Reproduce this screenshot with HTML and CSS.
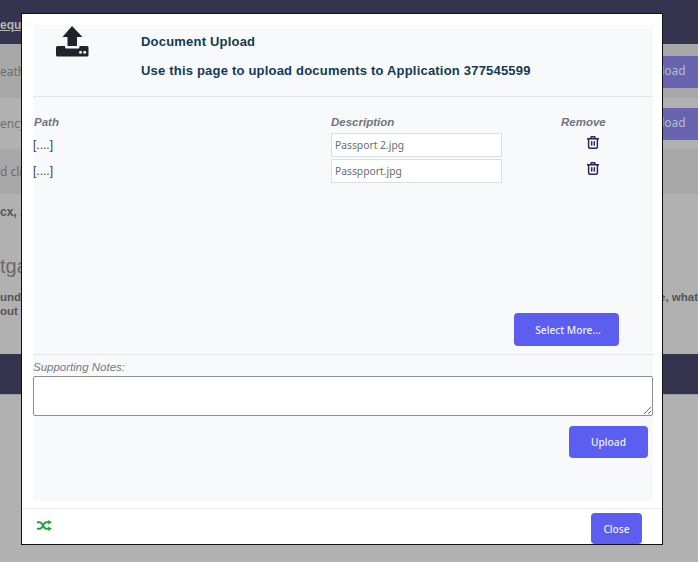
FILE: index.html
```html
<!DOCTYPE html>
<html lang="en">
<head>
<meta charset="utf-8">
<title>Document Upload</title>
<link rel="stylesheet" href="styles.css">
</head>
<body>
<div class="page">
  <div class="nav"><a class="nav-link" href="#">equ</a></div>
  <div class="band band-a"><span class="band-text">eath</span><span class="ghost-btn">Upload</span></div>
  <div class="band band-b"><span class="band-text">ency</span><span class="ghost-btn">Upload</span></div>
  <div class="band band-c"><span class="band-text">d clic</span></div>
  <div class="lower">
    <p class="docs">cx, .</p>
    <h2 class="mort">tga</h2>
    <div class="para">
      <span class="para-left">und<br>out t</span>
      <span class="para-right">e, what</span>
    </div>
  </div>
  <div class="footer-band"></div>
</div>

<div class="modal">
  <div class="panel">
    <div class="head">
      <svg class="upload-icon" viewBox="0 0 33 31" aria-hidden="true">
        <path class="ic-dark" d="M16 0 L26.500 11 H21 V20 H11.500 V11 H6.500 Z"/>
        <path class="ic-dark" d="M1.500 20 H9 V21 Q9 22.500 10.500 22.500 H22 Q23.500 22.500 23.500 21 V20 H31 Q32.500 20 32.500 21.500 V29 Q32.500 30.500 31 30.500 H1.500 Q0 30.500 0 29 V21.500 Q0 20 1.500 20 Z"/>
        <circle class="ic-light" cx="24.500" cy="26.300" r="1.500"/>
        <circle class="ic-light" cx="28.700" cy="26.300" r="1.500"/>
      </svg>
      <div class="titles">
        <div class="title">Document Upload</div>
        <div class="title title-sub">Use this page to upload documents to Application 377545599</div>
      </div>
    </div>

    <div class="files">
      <div class="col-head col-path">Path</div>
      <div class="col-head">Description</div>
      <div class="col-head col-remove">Remove</div>

      <div class="path">[....]</div>
      <input class="desc" type="text" value="Passport 2.jpg">
      <div class="trash-cell">
        <svg class="trash" viewBox="0 0 12 13" aria-hidden="true">
          <path d="M0.300 2.700 H11.700 M4 2.500 V1.500 Q4 0.700 4.800 0.700 H7.200 Q8 0.700 8 1.500 V2.500 M1.600 2.800 V10.800 Q1.600 12.300 3.100 12.300 H8.900 Q10.400 12.300 10.400 10.800 V2.800 M4.700 5.700 V9 M7.300 5.700 V9"/>
        </svg>
      </div>

      <div class="path">[....]</div>
      <input class="desc" type="text" value="Passpport.jpg">
      <div class="trash-cell">
        <svg class="trash" viewBox="0 0 12 13" aria-hidden="true">
          <path d="M0.300 2.700 H11.700 M4 2.500 V1.500 Q4 0.700 4.800 0.700 H7.200 Q8 0.700 8 1.500 V2.500 M1.600 2.800 V10.800 Q1.600 12.300 3.100 12.300 H8.900 Q10.400 12.300 10.400 10.800 V2.800 M4.700 5.700 V9 M7.300 5.700 V9"/>
        </svg>
      </div>
    </div>

    <div class="select-row"><button class="btn btn-select" type="button">Select More...</button></div>

    <div class="notes">
      <label class="notes-label" for="notes">Supporting Notes:</label>
      <textarea class="notes-input" id="notes"></textarea>
    </div>

    <div class="upload-row"><button class="btn btn-upload" type="button">Upload</button></div>
  </div>

  <div class="modal-foot">
    <svg class="shuffle" viewBox="0 0 15 11" aria-hidden="true">
      <path class="sh-line" d="M0 2.200 H3 C5.500 2.200 6.500 8.800 9 8.800 H12 M0 8.800 H3 C5.500 8.800 6.500 2.200 9 2.200 H12"/>
      <path class="sh-head" d="M11.200 0 L15 2.200 L11.200 4.400 Z M11.200 6.600 L15 8.800 L11.200 11 Z"/>
    </svg>
    <button class="btn btn-close" type="button">Close</button>
  </div>
</div>
</body>
</html>
```

FILE: styles.css
```css
* { box-sizing: border-box; }

html, body {
  margin: 0;
  height: 100%;
}

body {
  width: 698px;
  height: 562px;
  overflow: hidden;
  background: #b1b1b1;
  font-family: "Liberation Sans", Arial, sans-serif;
}

.page {
  width: 698px;
  height: 562px;
  overflow: hidden;
}

.nav {
  height: 44px;
  background: #36334f;
  padding-top: 15px;
}

.nav-link {
  color: #b6b6b6;
  font-size: 12px;
  font-weight: 700;
}

.band {
  display: flex;
  justify-content: space-between;
  align-items: center;
  font-family: "Noto Sans", sans-serif;
  font-size: 12px;
  color: #6d6d6d;
}

.band-a { height: 54px; background: #a8a8a8; }
.band-b { height: 51px; background: #b1b1b1; }
.band-c { height: 45px; background: #a8a8a8; }

.ghost-btn {
  width: 100px;
  height: 32px;
  margin-right: -10px;
  padding: 7px 0 0 37px;
  background: #6763ae;
  color: #b9b9cf;
  font-size: 12px;
  line-height: 16px;
  border-radius: 3px;
}

.band-a .ghost-btn { margin-top: 2px; }

.lower {
  height: 160px;
  color: #555;
}

.docs {
  margin: 0;
  padding-top: 11px;
  font-size: 12px;
  font-weight: 700;
  line-height: 14px;
}

.mort {
  margin: 35px 0 0;
  font-size: 20px;
  font-weight: 400;
  line-height: 24px;
  color: #6a6a6a;
}

.para {
  display: flex;
  justify-content: space-between;
  margin: 12px 0 0;
  font-size: 11.500px;
  font-weight: 700;
  line-height: 14px;
}

.para-left { display: block; }
.para-right { display: block; }

.footer-band {
  height: 41px;
  background: #36334f;
  border-bottom: 1px solid #9a9a9a;
}

.modal {
  position: absolute;
  left: 21px;
  top: 13px;
  width: 642px;
  height: 532px;
  display: flex;
  flex-direction: column;
  background: #fff;
  border: 1px solid #111;
  padding: 11px 0 0 11px;
}

.panel {
  width: 620px;
  height: 476px;
  display: flex;
  flex-direction: column;
  background: #f8f9fb;
}

.head {
  display: flex;
  height: 72px;
  border-bottom: 1px solid #e4e5e8;
  flex-shrink: 0;
}

.upload-icon {
  width: 33px;
  height: 31px;
  margin: 1px 0 0 23px;
}

.ic-dark { fill: #20232c; }
.ic-light { fill: #f4f5f7; }

.titles { margin-left: 52px; padding-top: 9px; }

.title {
  font-size: 13px;
  font-weight: 700;
  line-height: 16px;
  color: #123a55;
  letter-spacing: 0.2px;
}

.title-sub { margin-top: 13px; }

.files {
  display: grid;
  grid-template-columns: 298px 171px 1fr;
  grid-template-rows: 19px 26px 26px;
  padding-top: 17px;
  height: 132px;
  flex-shrink: 0;
}

.col-head {
  font-size: 11.500px;
  font-weight: 700;
  font-style: italic;
  line-height: 16px;
  color: #6f7480;
}

.col-path { padding-left: 1px; }
.col-remove { padding-left: 59px; }

.path {
  font-size: 12px;
  line-height: 24px;
  color: #3c3f48;
}

.desc {
  width: 171px;
  height: 24px;
  padding: 0 3px;
  border: 1px solid #dcdee3;
  background: #fff;
  font-family: "Noto Sans", sans-serif;
  font-size: 10.300px;
  color: #6a6c72;
  outline: none;
}

.trash-cell { padding: 3px 0 0 85px; }

.trash {
  display: block;
  width: 12px;
  height: 13px;
  fill: none;
  stroke: #2a2560;
  stroke-width: 1.500;
  stroke-linecap: round;
}

.select-row {
  display: flex;
  justify-content: flex-end;
  align-items: flex-start;
  height: 127px;
  margin-top: -1px;
  padding: 85px 34px 0 0;
  border-bottom: 1px solid #e4e5e8;
  flex-shrink: 0;
}

.btn {
  display: block;
  border: 0;
  border-radius: 4px;
  background: #5c5ef0;
  color: #eef;
  font-family: "Noto Sans", sans-serif;
  font-size: 10.200px;
  font-weight: 500;
  padding: 0;
}

.btn-select { width: 105px; height: 33px; padding-left: 3px; }
.btn-upload { width: 79px; height: 32px; }
.btn-close { width: 51px; height: 31px; }

.notes { padding-top: 4px; }

.notes-label {
  display: block;
  font-size: 11.500px;
  font-style: italic;
  line-height: 16px;
  color: #77797f;
  margin-bottom: 1px;
}

.notes-input {
  display: block;
  width: 620px;
  height: 40px;
  border: 1px solid #8d8d8d;
  border-radius: 2px;
  background: #fff;
  margin: 0;
  outline: none;
}

.upload-row {
  display: flex;
  justify-content: flex-end;
  padding: 10px 5px 0 0;
}

.modal-foot {
  display: flex;
  justify-content: space-between;
  align-items: flex-start;
  width: 640px;
  height: 36px;
  margin: 7px 0 0 -11px;
  border-top: 1px solid #ebebeb;
  padding: 4px 20px 0 15px;
}

.shuffle {
  width: 15px;
  height: 11px;
  margin-top: 7px;
}

.sh-line { fill: none; stroke: #22a33f; stroke-width: 2; }
.sh-head { fill: #22a33f; }
```
